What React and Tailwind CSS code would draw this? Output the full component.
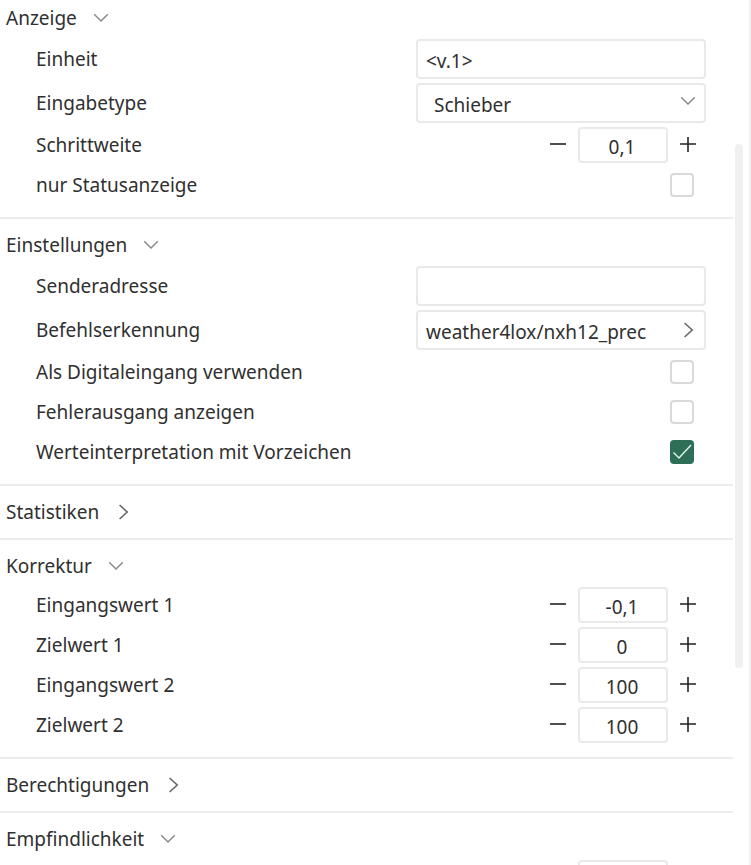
import React, { useState } from "react";

const ChevronDown = ({ className = "" }) => (
  <svg
    viewBox="0 0 16 16"
    fill="none"
    stroke="#8a8a8a"
    strokeWidth="1.5"
    className={`w-4 h-4 shrink-0 ${className}`}
  >
    <path d="M1.2 4.2 L8 11 L14.8 4.2" />
  </svg>
);

const ChevronRight = () => (
  <svg
    viewBox="0 0 16 16"
    fill="none"
    stroke="#666666"
    strokeWidth="1.6"
    className="w-4 h-4 shrink-0"
  >
    <path d="M4.6 1 L12.2 8 L4.6 15" />
  </svg>
);

const Section = ({ title, first, defaultOpen, children }) => {
  const [open, setOpen] = useState(Boolean(defaultOpen));

  return (
    <section className="border-b-2 border-[#ececeb]">
      <h2 className={`${first ? "pt-1" : "pt-3"} ${open ? "pb-[5px]" : "pb-3"}`}>
        <button
          type="button"
          aria-expanded={open}
          onClick={() => setOpen(!open)}
          className="flex items-center gap-4 h-7 pl-1.5"
        >
          {title}
          {open ? <ChevronDown /> : <ChevronRight />}
        </button>
      </h2>
      {open && <div className="pb-3">{children}</div>}
    </section>
  );
};

const fieldBox =
  "w-[290px] h-10 rounded border-2 border-[#e9e9e9] bg-white text-left outline-none";

const TextRow = ({ id, label, value }) => (
  <div className="flex items-center justify-between h-11 pl-9 pr-[27px]">
    <label htmlFor={id}>{label}</label>
    <input
      id={id}
      type="text"
      defaultValue={value}
      className={`${fieldBox} px-2 pt-1`}
    />
  </div>
);

const SelectRow = ({ id, label, options }) => (
  <div className="flex items-center justify-between h-11 pl-9 pr-[27px]">
    <label htmlFor={id}>{label}</label>
    <div className="relative">
      <select id={id} className={`${fieldBox} appearance-none pl-4 pr-8 pt-1`}>
        {options.map((option) => (
          <option key={option}>{option}</option>
        ))}
      </select>
      <ChevronDown className="absolute right-2.5 top-2.5 pointer-events-none" />
    </div>
  </div>
);

const LinkRow = ({ id, label, value }) => (
  <div className="flex items-center justify-between h-11 pl-9 pr-[27px]">
    <label htmlFor={id}>{label}</label>
    <button
      id={id}
      type="button"
      className={`${fieldBox} flex items-center justify-between px-2`}
    >
      <span className="pt-1">{value}</span>
      <ChevronRight />
    </button>
  </div>
);

const NumberRow = ({ id, label, ariaLabel, value }) => {
  const [number, setNumber] = useState(value);

  const step = (delta) => {
    const next = (parseFloat(number.replace(",", ".")) || 0) + delta;
    setNumber(String(next).replace(".", ","));
  };

  return (
    <div className="flex items-center justify-between h-10 pl-9 pr-[27px]">
      <label htmlFor={id}>{label}</label>
      <div className="flex items-center gap-3 pr-2.5">
        <button type="button" aria-label="-" onClick={() => step(-1)}>
          <svg viewBox="0 0 16 16" stroke="#222222" strokeWidth="1.6" className="w-4 h-4">
            <path d="M0 7 H16" />
          </svg>
        </button>
        <input
          id={id}
          type="text"
          inputMode="decimal"
          aria-label={ariaLabel}
          value={number}
          onChange={(e) => setNumber(e.target.value)}
          className="w-[90px] h-9 rounded border-2 border-[#e9e9e9] pt-1 pr-0.5 text-center outline-none"
        />
        <button type="button" aria-label="+" onClick={() => step(1)}>
          <svg viewBox="0 0 16 16" stroke="#222222" strokeWidth="1.6" className="w-4 h-4">
            <path d="M0 7 H16 M8 -1 V15" />
          </svg>
        </button>
      </div>
    </div>
  );
};

const CheckRow = ({ id, label, checked }) => (
  <div className="flex items-center justify-between h-10 pl-9 pr-[39px]">
    <label htmlFor={id}>{label}</label>
    <div className="relative w-6 h-6">
      <input
        id={id}
        type="checkbox"
        defaultChecked={checked}
        className="peer block w-6 h-6 appearance-none rounded border-2 border-[#d9d9d9] bg-white checked:border-[#2d6e57] checked:bg-[#2d6e57]"
      />
      <svg
        viewBox="0 0 24 24"
        fill="none"
        stroke="#e8f3ee"
        strokeWidth="1.4"
        className="absolute inset-0 hidden w-6 h-6 pointer-events-none peer-checked:block"
      >
        <path d="M3.5 12.5 L9 18 L21 5" />
      </svg>
    </div>
  </div>
);

const App = () => {
  return (
    <div className="flex h-screen overflow-hidden bg-white font-['Noto_Sans',sans-serif] text-[19px] leading-7 text-[#303030]">
      <main className="flex-1 min-w-0">
        <Section title="Anzeige" first defaultOpen>
          <TextRow id="einheit" label="Einheit" value="<v.1>" />
          <SelectRow id="eingabetype" label="Eingabetype" options={["Schieber"]} />
          <NumberRow id="schrittweite" label="Schrittweite" value="0,1" />
          <CheckRow id="statusanzeige" label="nur Statusanzeige" />
        </Section>
        <Section title="Einstellungen" defaultOpen>
          <TextRow id="senderadresse" label="Senderadresse" value="" />
          <LinkRow
            id="befehlserkennung"
            label="Befehlserkennung"
            value="weather4lox/nxh12_prec"
          />
          <CheckRow id="digitaleingang" label="Als Digitaleingang verwenden" />
          <CheckRow id="fehlerausgang" label="Fehlerausgang anzeigen" />
          <CheckRow id="vorzeichen" label="Werteinterpretation mit Vorzeichen" checked />
        </Section>
        <Section title="Statistiken" />
        <Section title="Korrektur" defaultOpen>
          <NumberRow id="eingangswert1" label="Eingangswert 1" value="-0,1" />
          <NumberRow id="zielwert1" label="Zielwert 1" value="0" />
          <NumberRow id="eingangswert2" label="Eingangswert 2" value="100" />
          <NumberRow id="zielwert2" label="Zielwert 2" value="100" />
        </Section>
        <Section title="Berechtigungen" />
        <Section title="Empfindlichkeit" defaultOpen>
          <NumberRow id="empfindlichkeit" ariaLabel="Empfindlichkeit" value="" />
        </Section>
      </main>
      <div className="w-[18px] shrink-0 border-r-2 border-[#f2f2f2] pl-0.5 pt-36">
        <div className="w-2 h-[524px] rounded-full bg-[#f0f0f0]" />
      </div>
    </div>
  );
};

export default App;
